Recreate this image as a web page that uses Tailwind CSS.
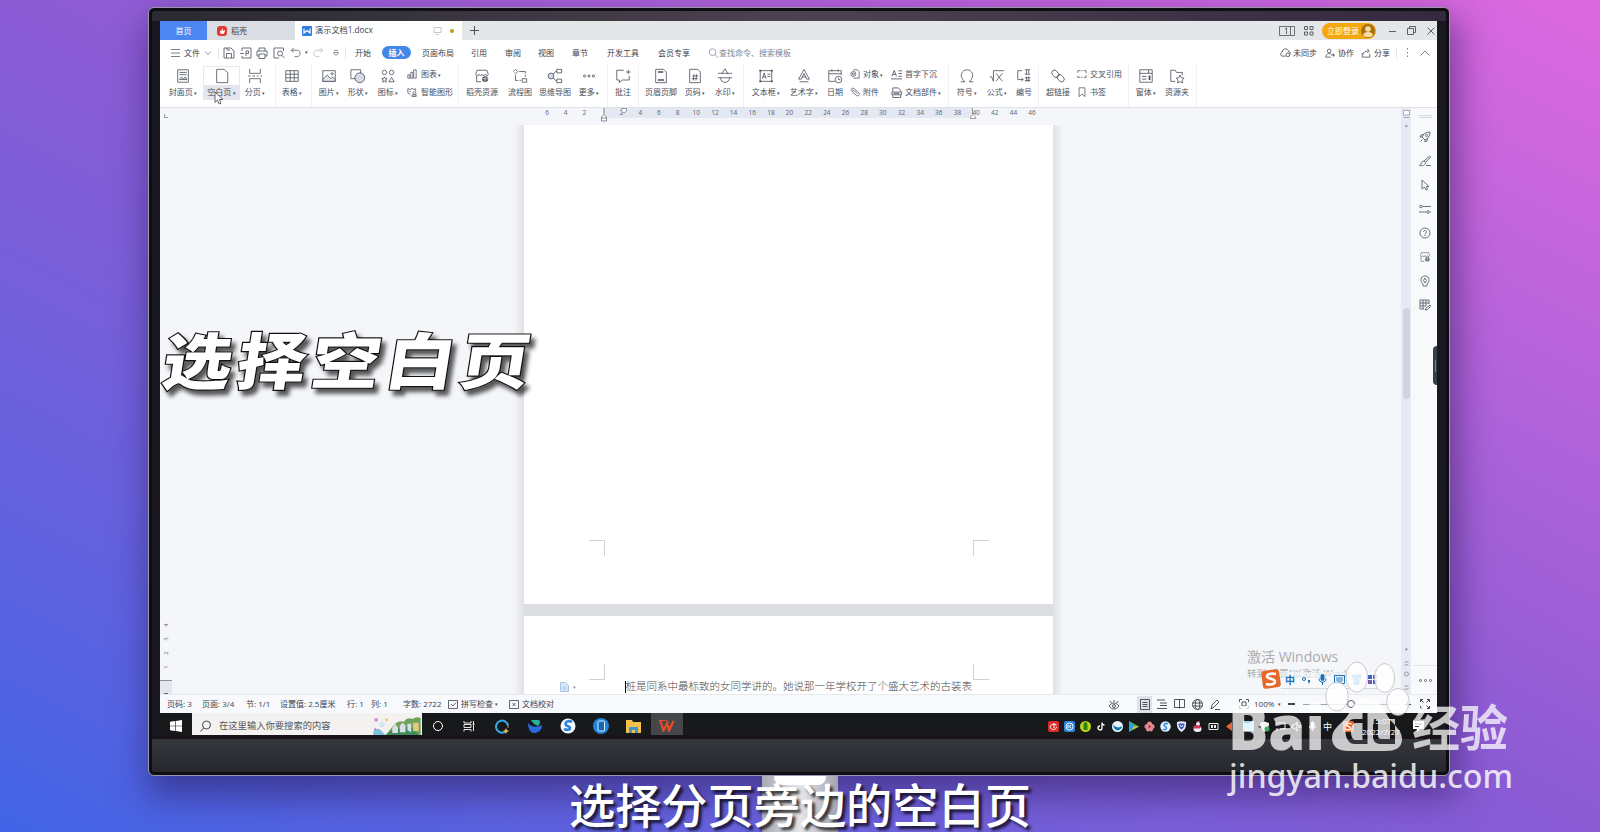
<!DOCTYPE html>
<html>
<head>
    <meta charset="UTF-8">
    <meta name="viewport" content="width=device-width, initial-scale=1.0">
    <title>演示文档1.docx</title>
    <script src="https://cdn.jsdelivr.net/npm/@tailwindcss/browser@4"></script>
    <style>
        symbol {
            fill: none;
            stroke: currentColor;
            stroke-width: 0.9;
        }
    </style>
</head>
<body class="relative w-[1600px] h-[832px] overflow-hidden pt-[7px] pl-[148px] bg-linear-to-tr from-[#3f64e6] via-[#8a5bd4] to-[#de68e0] font-['Open_Sans','Noto_Sans_CJK_SC',sans-serif] text-[8px] leading-none whitespace-nowrap text-[#3d424e]">

    <!-- Icon set -->
    <svg class="hidden">
        <symbol id="cover" viewBox="0 0 18 18"><path d="M3 2h12v14H3zM5 5h8M5 7.500h8M5 13l2.500-3 2 3 2-3 2 3z"/></symbol>
        <symbol id="blank" viewBox="0 0 18 18"><path d="M3 1.500h8.500l4 4v11H3z"/></symbol>
        <symbol id="break" viewBox="0 0 18 18"><path d="M3 1v5h12V1M3 17v-5h12v5M1 9h3m2 0h3m2 0h2m2 0h2"/></symbol>
        <symbol id="table" viewBox="0 0 18 18"><path d="M2 3h14v12H2zM2 7h14M2 11h14M7 3v12M11.500 3v12"/></symbol>
        <symbol id="image" viewBox="0 0 18 18"><path d="M2 3h14v12H2z"/><path d="M2 13l5-5 4 4 2-2 3 3v2H2z" fill="#e1e4ea"/><circle cx="12.500" cy="6.500" r="1.200"/></symbol>
        <symbol id="shape" viewBox="0 0 18 18"><path d="M1 2h11v10H1z"/><circle cx="11" cy="11" r="5.500" fill="#d5dae3"/></symbol>
        <symbol id="icons" viewBox="0 0 18 18"><circle cx="5" cy="5" r="2.500"/><circle cx="13" cy="5" r="2.500"/><path d="M5 10l1 2h2l-1.500 1.500.5 2.500-2-1.300L3 16l.5-2.500L2 12h2zM13 10.500l3 5h-6z"/></symbol>
        <symbol id="chart" viewBox="0 0 12 12"><path d="M1 7h2.500v4H1zM4.500 4H7v7H4.500zM8 1h3v10H8z"/></symbol>
        <symbol id="smart" viewBox="0 0 12 12"><path d="M1 2l3 1 2-1.500L8 3l2-1v3M1 2v5l3 2M3 5.500h2M6 9.500h5v2H6z"/><circle cx="9" cy="7.500" r="1.800"/></symbol>
        <symbol id="store" viewBox="0 0 18 18"><path d="M3.500 2.500h11L16 7c0 2-3 2-3.500 0-.5 2-3 2-3.500 0-.5 2-3 2-3.500 0C5 9 2 9 2 7zM3 9v6.500h5"/><circle cx="12.500" cy="12.500" r="3" fill="#555b68"/><path d="M12.500 9v7M9 12h7" stroke="#fff" stroke-width=".6"/></symbol>
        <symbol id="flow" viewBox="0 0 18 18"><path d="M4 1.500L6.500 4 4 6.500 1.500 4zM8 4h7v6M4 8v6h6" stroke-dasharray="9 1.500"/><path d="M11.500 12h5v4h-5z"/></symbol>
        <symbol id="mind" viewBox="0 0 18 18"><circle cx="4.500" cy="9" r="3.300" fill="#d5dae3"/><path d="M7 7l3-3.500h1M7 11l3 3.500h1M11 1.500h5.500v4H11zM11 12.500h5.500v4H11z"/></symbol>
        <symbol id="more" viewBox="0 0 18 18"><circle cx="4" cy="9" r="1.200"/><circle cx="9" cy="9" r="1.200"/><circle cx="14" cy="9" r="1.200"/></symbol>
        <symbol id="comment" viewBox="0 0 18 18"><path d="M10 2.500H2v11h3v3l3-3h8V9M12.500 4.500h5M15 2v5"/></symbol>
        <symbol id="header" viewBox="0 0 18 18"><path d="M3 1.500h9l3 3v12H3z"/><path d="M5.500 4.500h6M5.500 13.500h7" stroke-width="1.800"/></symbol>
        <symbol id="pageno" viewBox="0 0 18 18"><path d="M3 1.500h9l3 3v12H3zM6 9h6.500M5.500 12h6.500M8 7l-1 7M11 7l-1 7"/></symbol>
        <symbol id="water" viewBox="0 0 18 18"><path d="M1 6h16M1 11h16M9 1L5.500 6M9 1l3.500 6M4 11c0 7 10 7 10 0"/></symbol>
        <symbol id="textbox" viewBox="0 0 18 18"><path d="M2.500 3h13v12h-13zM5 12l2-6.500L9 12M5.500 10h3M10.500 7h3.500M10.500 9.500h3.500"/><path d="M1.500 2h2v2h-2zM14.500 2h2v2h-2zM1.500 14h2v2h-2zM14.500 14h2v2h-2z" fill="currentColor" stroke="none"/></symbol>
        <symbol id="wordart" viewBox="0 0 18 18"><path d="M9 1.500L3 12.500h3L9 6l3 6.500h3zM6.500 10h5M4 15.500h10"/></symbol>
        <symbol id="date" viewBox="0 0 18 18"><path d="M9 15H2V3h14v5M2 6.500h14M5.500 1.500V4M12.500 1.500V4"/><circle cx="13" cy="13" r="3.700"/><path d="M13 11v2.200h2"/></symbol>
        <symbol id="object" viewBox="0 0 12 12"><path d="M4 1h5l2 2v8H4"/><circle cx="4" cy="6" r="3"/><circle cx="4" cy="6" r="1.200"/></symbol>
        <symbol id="clip" viewBox="0 0 12 12"><path d="M1.500 4.500c-1-3 2-4 3.500-2.500l5.500 5c2 2-.5 5-3 3L3 6C2 4.500 4 3.500 5 4.500L9 8"/></symbol>
        <symbol id="drop" viewBox="0 0 12 12"><path d="M1 8l2.500-6.500L6 8M2 6h3M8 2h4M8 5h4M8 8h4M0 10.800h12"/></symbol>
        <symbol id="parts" viewBox="0 0 12 12"><path d="M2 5V1h6l2.500 2.500V5M2 9v2.500h8.500V9M1 5.500h10.500v3H1zM3 7h6"/></symbol>
        <symbol id="omega" viewBox="0 0 18 18"><path d="M2 15.500h4.500C-1 9 3.500 2 9 2s10 7 2.500 13.500H16"/></symbol>
        <symbol id="sqrt" viewBox="0 0 18 18"><path d="M1 10h2l2 5V3h12M8 6l7 9M15 6l-7 9"/></symbol>
        <symbol id="number" viewBox="0 0 18 18"><path d="M7 3H2v10h6M6 11l2 2-2 2M10 2h6M10 7h6M11.700 2v5M14.300 2v5M10 11h6M10 14h6M12 9.500v6M14.500 9.500v6"/></symbol>
        <symbol id="link" viewBox="0 0 18 18"><rect x="3" y="2" width="6" height="9" rx="3" transform="rotate(-40 6 6.500)"/><rect x="9" y="7" width="6" height="9" rx="3" transform="rotate(-40 12 11.500)"/></symbol>
        <symbol id="cross" viewBox="0 0 12 12"><path d="M4 2H1v2.500M4 10H1V8M8 2h3v3M8 10h3V7.500M5 2h1.500M5 10h1.500"/></symbol>
        <symbol id="bookmark" viewBox="0 0 12 12"><path d="M2.500 1h7v10.500L6 8.500l-3.500 3z"/></symbol>
        <symbol id="form" viewBox="0 0 18 18"><path d="M2 2h14v14H2zM2 6h14M4.500 9.500h5M4.500 12.500h5M12 2v4"/><path d="M13 8.500v5" stroke-width="2"/></symbol>
        <symbol id="folder" viewBox="0 0 18 18"><path d="M7 15H2V2.500h5L8.500 5H15v3M12.500 8l1.400 3 3.100.4-2.200 2.200.6 3.200-2.900-1.500-2.900 1.500.6-3.200L8 11.400l3.100-.4z"/></symbol>
        <symbol id="save" viewBox="0 0 12 12"><path d="M1 1h7l3 3v7H1zM3.500 11V6.500h5V11M4 1v2h3"/></symbol>
        <symbol id="pdf" viewBox="0 0 12 12"><path d="M2 4V1h9v10H2V9M0 6.500h4M6 9V4h2.500v2.500H6"/></symbol>
        <symbol id="print" viewBox="0 0 12 12"><path d="M3 4V1h6v3M3 9H1V4h10v5H9M3 7h6v4.500H3z"/></symbol>
        <symbol id="preview" viewBox="0 0 12 12"><path d="M10.500 4V1H1v10h5"/><circle cx="7" cy="6.500" r="2.500"/><path d="M9 8.500l2.500 2.500"/></symbol>
        <symbol id="undo" viewBox="0 0 12 12"><path d="M4 1L1.500 3.500 4 6M1.500 3.500H8c4 0 4 7 0 7H5"/></symbol>
        <symbol id="search" viewBox="0 0 12 12"><circle cx="5.500" cy="5" r="4"/><path d="M8.500 8l3 3.500"/></symbol>
        <symbol id="cloud" viewBox="0 0 12 12"><path d="M6 10H3C0 10 0 6 2.500 5.500 2.500 1 9 1 9.500 5c2 .3 2 2 1.500 3"/><circle cx="8.500" cy="8.500" r="2"/></symbol>
        <symbol id="user" viewBox="0 0 12 12"><circle cx="5" cy="3.500" r="2.200"/><path d="M1 11c0-5 6-5 7-3M1 11h6M8 8.500h4M10 6.500v4"/></symbol>
        <symbol id="share" viewBox="0 0 12 12"><path d="M1.500 6v5h9V7M2.500 8c0-3 3-4.500 6.500-4.500M7.500 1L10 3.500 7.500 6"/></symbol>
        <symbol id="rocket" viewBox="0 0 12 12"><path d="M11 1c-4 0-7 2-8 5l3 3c3-1 5-4 5-8zM5 3.500L2 4 1 6h2M8.500 7L8 10l-2 1V9M1.500 10.500l2-2"/><circle cx="7.500" cy="4.500" r="1"/></symbol>
        <symbol id="brush" viewBox="0 0 12 12"><path d="M10.500 1L5 6l1.500 1.500L11.500 2zM5 6c-3 0-2 3-4.500 4.500 2.500.5 6 0 6-3M7 10.500h5"/></symbol>
        <symbol id="arrow" viewBox="0 0 12 12"><path d="M3 1v9l2.500-2L7 11l1.500-.7L7.500 7.500H10z"/></symbol>
        <symbol id="sliders" viewBox="0 0 12 12"><circle cx="2" cy="3.500" r="1.300"/><circle cx="9" cy="9" r="1.300"/><path d="M4 3.500h8M0 9h7M11 9h1"/></symbol>
        <symbol id="help" viewBox="0 0 12 12"><circle cx="6" cy="6" r="5"/><path d="M4.500 5c0-2 3-2 3 0 0 1.200-1.500 1-1.500 2.300M6 8v1"/></symbol>
        <symbol id="bulb" viewBox="0 0 12 12"><path d="M4 9C1 7 1 1 6 1s5 6 2 8v2H4z"/><path d="M6 3l1.500 2.500L6 8 4.500 5.500z"/></symbol>
        <symbol id="grid" viewBox="0 0 12 12"><path d="M5 10H1V1h9v4M1 4h9M1 7h6M4 1v9M7 1v6M6 11l1-2 4-3 .5 1.500-3 3z"/></symbol>
    </svg>

    <!-- Monitor -->
    <div class="relative w-[1302px] h-[769px] rounded-[6px] border border-[#9b96ad] bg-[#0e0d11] pt-[3px] px-[3px] shadow-[4px_16px_34px_4px_rgba(35,20,80,0.5)]">
        <div class="h-[761px] rounded-[3px] bg-[#191820] flex flex-col">
            <div class="h-[10px] bg-linear-to-r from-[#2b2932] via-[#4b434f] to-[#332a40] shrink-0 rounded-t-[3px]"></div>
            <div class="w-[1277px] h-[714px] ml-2 bg-[#f4f6f9] flex flex-col overflow-hidden">

                <!-- Tabs -->
                <div class="h-[19px] shrink-0 flex items-center bg-[#e4e6e8]">
                    <div class="w-[47px] h-full bg-[#4d86f0] text-white flex items-center justify-center">首页</div>
                    <div class="w-[88px] h-full bg-[#dadde2] flex items-center gap-1 pl-2.5">
                        <svg class="size-[10px]" viewBox="0 0 10 10"><rect width="10" height="10" rx="3" fill="#e23b36"/><path d="M3 5c2 0 2-1 2-3 1 1 1 2 .5 3L8 4c0 2-1 4-3 4S3 6.500 3 5z" fill="#fff"/></svg>
                        <span>稻壳</span>
                    </div>
                    <div class="w-[167px] h-full bg-white flex items-center pl-[7px]">
                        <svg class="size-[10px] mr-[3px]" viewBox="0 0 10 10"><rect width="10" height="10" rx="1" fill="#2e7ce0"/><path d="M2 2.500v4.500l3-2.500L8 7V2.500" fill="none" stroke="#fff" stroke-width="1.200"/></svg>
                        <span class="w-[58px] text-[8.200px]">演示文档1.docx</span>
                        <svg class="w-[9px] h-[8px] ml-[60px]" viewBox="0 0 9 8" fill="none" stroke="#c3c8d0"><path d="M1 .5h7v5H1zM3 7.500h3"/></svg>
                        <span class="size-1 rounded-full bg-[#cf9420] ml-2"></span>
                    </div>
                    <svg class="size-[9px] ml-2" viewBox="0 0 9 9" stroke="#4a4f5c"><path d="M4.500 0v9M0 4.500h9"/></svg>
                    <div class="ml-auto pr-[2px] flex items-center text-[#5a606c]">
                        <svg class="w-4 h-[10px] mr-[9px]" viewBox="0 0 16 10" fill="none" stroke="currentColor" stroke-width=".9"><path d="M.5.5h15v9H.5zM11.500 .5v9M6 3l1.500-1v6"/></svg>
                        <svg class="size-[10px] mr-2" viewBox="0 0 10 10" fill="none" stroke="currentColor"><path d="M.5.5h3v3h-3zM6 .5h3v3H6zM.5 6h3v3h-3zM6 6h3v3H6z"/></svg>
                        <div class="w-[54px] h-4 rounded-full bg-[#f5a70f] text-white flex items-center justify-between pl-[5px] pr-px">
                            <span>立即登录</span>
                            <svg class="size-[14px]" viewBox="0 0 14 14"><circle cx="7" cy="7" r="7" fill="#a8700f"/><circle cx="7" cy="5" r="2.800" fill="#f7dca4"/><path d="M2 11c1-4 9-4 10 0-2 3-8 3-10 0z" fill="#f7dca4"/></svg>
                        </div>
                        <svg class="w-[7px] h-2 ml-[13px]" viewBox="0 0 7 8" stroke="currentColor"><path d="M0 4.500h7"/></svg>
                        <svg class="size-[9px] ml-[11px]" viewBox="0 0 9 9" fill="none" stroke="currentColor"><path d="M.5 2.500h6v6h-6zM2.500 2V.5h6v6H7"/></svg>
                        <svg class="size-2 ml-[11px]" viewBox="0 0 8 8" stroke="currentColor"><path d="M.5.5l7 7M7.500.5l-7 7"/></svg>
                    </div>
                </div>

                <!-- Menu bar -->
                <div class="h-[25px] shrink-0 flex items-center bg-white pl-[11px] pr-[7px] *:shrink-0">
                    <svg class="w-[9px] h-2" viewBox="0 0 9 8" stroke="#5a606c"><path d="M0 .5h9M0 4h9M0 7.500h9" stroke-width=".8"/></svg>
                    <span class="ml-1 w-4">文件</span>
                    <svg class="ml-1 w-2 h-2" viewBox="0 0 8 8" fill="none" stroke="#8b909b"><path d="M1 2.500L4 5.500l3-3"/></svg>
                    <span class="ml-1.5 w-px h-3 bg-[#e2e4e8]"></span>
                    <svg class="ml-1 size-3 text-[#5a606c]"><use href="#save"/></svg>
                    <svg class="ml-[5px] size-3 text-[#5a606c]"><use href="#pdf"/></svg>
                    <svg class="ml-1 size-3 text-[#5a606c]"><use href="#print"/></svg>
                    <svg class="ml-[5px] size-3 text-[#5a606c]"><use href="#preview"/></svg>
                    <svg class="ml-[5px] size-[11px] text-[#5a606c]"><use href="#undo"/></svg>
                    <span class="ml-[2px] w-[6px] text-[5px] text-center">▾</span>
                    <svg class="ml-1 size-[11px] text-[#b9bdc5] -scale-x-100"><use href="#undo"/></svg>
                    <svg class="ml-2 w-2 h-2" viewBox="0 0 8 8" fill="none" stroke="#8b909b"><path d="M2 1.500h4M1.500 3.500h5L4 6.500z"/></svg>
                    <span class="ml-[5px] w-px h-3 bg-[#e2e4e8]"></span>
                    <span class="ml-[9px] w-[17px]">开始</span>
                    <span class="ml-2.5 w-[29px] h-[13px] rounded-full bg-[#3f87e8] text-white font-bold flex items-center justify-center">插入</span>
                    <span class="ml-[11px] w-8">页面布局</span>
                    <span class="ml-[17px] w-4">引用</span>
                    <span class="ml-[18px] w-4">审阅</span>
                    <span class="ml-[17px] w-4">视图</span>
                    <span class="ml-[18px] w-4">章节</span>
                    <span class="ml-[19px] w-8">开发工具</span>
                    <span class="ml-[19px] w-8">会员专享</span>
                    <svg class="ml-[18px] size-[10px] text-[#8088a0]"><use href="#search"/></svg>
                    <span class="ml-px text-[#7d859b]">查找命令、搜索模板</span>
                    <svg class="ml-auto size-[11px]"><use href="#cloud"/></svg>
                    <span class="ml-[2px]">未同步</span>
                    <svg class="ml-2 size-[10px]"><use href="#user"/></svg>
                    <span class="ml-[3px]">协作</span>
                    <svg class="ml-[7px] size-[10px]"><use href="#share"/></svg>
                    <span class="ml-[3px]">分享</span>
                    <span class="ml-[6px] w-px h-3 bg-[#e2e4e8]"></span>
                    <svg class="ml-[9px] w-[3px] h-[9px]" viewBox="0 0 3 9" fill="#7b808b"><path d="M1 0h1v1.500H1zM1 4h1v1.500H1zM1 7.500h1V9H1z"/></svg>
                    <svg class="ml-[11px] w-[10px] h-[6px]" viewBox="0 0 10 6" fill="none" stroke="#7b808b"><path d="M.5 5.500L5 1l4.500 4.500"/></svg>
                </div>

                <!-- Ribbon -->
                <div class="h-[43px] shrink-0 flex items-start bg-white border-b border-[#dfe2e6] pl-[3px] *:shrink-0 text-[#484e5b]">
                    <div class="w-10 h-[34px] pt-[3px] flex flex-col items-center gap-1"><svg class="size-4"><use href="#cover"/></svg><span>封面页<i class="not-italic text-[5px]"> ▾</i></span></div>
                    <div class="w-[37px] h-[34px] mt-px pt-[2px] border border-[#e6e8ec] bg-linear-to-b from-white from-55% to-[#e3e6ec] to-55% flex flex-col items-center gap-1"><svg class="size-4 shrink-0 -mt-px"><use href="#blank"/></svg><span>空白页<i class="not-italic text-[5px]"> ▾</i></span></div>
                    <div class="w-[30px] pt-[3px] flex flex-col items-center gap-1"><svg class="size-4"><use href="#break"/></svg><span>分页<i class="not-italic text-[5px]"> ▾</i></span></div>
                    <span class="ml-[5px] w-px h-[42px] bg-[#f0f1f3]"></span>
                    <div class="w-8 pt-[3px] flex flex-col items-center gap-1"><svg class="size-4"><use href="#table"/></svg><span>表格<i class="not-italic text-[5px]"> ▾</i></span></div>
                    <span class="ml-[3px] mr-[2px] w-px h-[42px] bg-[#f0f1f3]"></span>
                    <div class="w-[30px] pt-[3px] flex flex-col items-center gap-1"><svg class="size-4"><use href="#image"/></svg><span>图片<i class="not-italic text-[5px]"> ▾</i></span></div>
                    <div class="w-[28px] pt-[3px] flex flex-col items-center gap-1"><svg class="size-4"><use href="#shape"/></svg><span>形状<i class="not-italic text-[5px]"> ▾</i></span></div>
                    <div class="w-8 pt-[3px] flex flex-col items-center gap-1"><svg class="size-4"><use href="#icons"/></svg><span>图标<i class="not-italic text-[5px]"> ▾</i></span></div>
                    <div class="w-[53px] ml-px pl-[2px] pt-1 flex flex-col gap-2">
                        <div class="flex items-center gap-1"><svg class="size-[10px]"><use href="#chart"/></svg><span>图表<i class="not-italic text-[5px]"> ▾</i></span></div>
                        <div class="flex items-center gap-1"><svg class="size-[10px]"><use href="#smart"/></svg><span>智能图形</span></div>
                    </div>
                    <span class="w-px h-[42px] bg-[#f0f1f3]"></span>
                    <div class="w-[46px] pt-[3px] flex flex-col items-center gap-1"><svg class="size-4"><use href="#store"/></svg><span>稻壳资源</span></div>
                    <div class="w-[30px] pt-[3px] flex flex-col items-center gap-1"><svg class="size-4"><use href="#flow"/></svg><span>流程图</span></div>
                    <div class="w-10 pt-[3px] flex flex-col items-center gap-1"><svg class="size-4"><use href="#mind"/></svg><span>思维导图</span></div>
                    <div class="w-[28px] pt-[3px] flex flex-col items-center gap-1"><svg class="size-4"><use href="#more"/></svg><span>更多<i class="not-italic text-[5px]"> ▾</i></span></div>
                    <span class="ml-1 w-px h-[42px] bg-[#f0f1f3]"></span>
                    <div class="w-[30px] pt-[3px] flex flex-col items-center gap-1"><svg class="size-4"><use href="#comment"/></svg><span>批注</span></div>
                    <span class="w-px h-[42px] bg-[#f0f1f3]"></span>
                    <div class="w-11 pt-[3px] flex flex-col items-center gap-1"><svg class="size-4"><use href="#header"/></svg><span>页眉页脚</span></div>
                    <div class="w-6 pt-[3px] flex flex-col items-center gap-1"><svg class="size-4"><use href="#pageno"/></svg><span>页码<i class="not-italic text-[5px]"> ▾</i></span></div>
                    <div class="w-9 pt-[3px] flex flex-col items-center gap-1"><svg class="size-4"><use href="#water"/></svg><span>水印<i class="not-italic text-[5px]"> ▾</i></span></div>
                    <span class="w-px h-[42px] bg-[#f0f1f3]"></span>
                    <div class="w-11 pt-[3px] flex flex-col items-center gap-1"><svg class="size-4"><use href="#textbox"/></svg><span>文本框<i class="not-italic text-[5px]"> ▾</i></span></div>
                    <div class="w-8 pt-[3px] flex flex-col items-center gap-1"><svg class="size-4"><use href="#wordart"/></svg><span>艺术字<i class="not-italic text-[5px]"> ▾</i></span></div>
                    <div class="w-[30px] pt-[3px] flex flex-col items-center gap-1"><svg class="size-4"><use href="#date"/></svg><span>日期</span></div>
                    <div class="w-[41px] pt-1 flex flex-col gap-2">
                        <div class="flex items-center gap-[3px]"><svg class="size-[10px]"><use href="#object"/></svg><span>对象<i class="not-italic text-[5px]"> ▾</i></span></div>
                        <div class="flex items-center gap-[3px]"><svg class="size-[10px]"><use href="#clip"/></svg><span>附件</span></div>
                    </div>
                    <div class="w-[57px] pt-1 flex flex-col gap-2">
                        <div class="h-[10px] flex items-center gap-[3px]"><svg class="size-[11px]"><use href="#drop"/></svg><span>首字下沉</span></div>
                        <div class="h-[10px] flex items-center gap-[3px]"><svg class="size-[11px]"><use href="#parts"/></svg><span>文档部件<i class="not-italic text-[5px]"> ▾</i></span></div>
                    </div>
                    <span class="w-px h-[42px] bg-[#f0f1f3] mr-[3px]"></span>
                    <div class="w-[30px] pt-[3px] flex flex-col items-center gap-1"><svg class="size-4"><use href="#omega"/></svg><span>符号<i class="not-italic text-[5px]"> ▾</i></span></div>
                    <div class="w-[30px] pt-[3px] flex flex-col items-center gap-1"><svg class="size-4"><use href="#sqrt"/></svg><span>公式<i class="not-italic text-[5px]"> ▾</i></span></div>
                    <div class="w-6 pt-[3px] flex flex-col items-center gap-1"><svg class="size-4"><use href="#number"/></svg><span>编号</span></div>
                    <span class="ml-[2px] w-px h-[42px] bg-[#f0f1f3]"></span>
                    <div class="w-[38px] pt-[3px] flex flex-col items-center gap-1"><svg class="size-4"><use href="#link"/></svg><span>超链接</span></div>
                    <div class="w-[51px] pt-1 flex flex-col gap-2">
                        <div class="flex items-center gap-[3px]"><svg class="size-[10px]"><use href="#cross"/></svg><span>交叉引用</span></div>
                        <div class="flex items-center gap-[3px]"><svg class="size-[10px]"><use href="#bookmark"/></svg><span>书签</span></div>
                    </div>
                    <span class="w-px h-[42px] bg-[#f0f1f3]"></span>
                    <div class="w-[34px] pt-[3px] flex flex-col items-center gap-1"><svg class="size-4"><use href="#form"/></svg><span>窗体<i class="not-italic text-[5px]"> ▾</i></span></div>
                    <div class="w-[28px] pt-[3px] flex flex-col items-center gap-1"><svg class="size-4"><use href="#folder"/></svg><span>资源夹</span></div>
                    <span class="ml-[5px] w-px h-[42px] bg-[#f0f1f3]"></span>
                </div>

                <!-- Work area -->
                <div class="h-[586px] shrink-0 flex overflow-hidden">
                    <!-- Vertical ruler -->
                    <div class="w-[12px] flex flex-col items-center justify-end text-[6px] text-[#666b77]">
                        <span class="mb-auto mt-1.5 size-1 border-l border-b border-[#9a9ea8]"></span>
                        <span class="size-[8px] mb-[6px] -rotate-90 flex items-center justify-center">4</span>
                        <span class="size-[8px] mb-[6px] -rotate-90 flex items-center justify-center">3</span>
                        <span class="size-[8px] mb-[6px] -rotate-90 flex items-center justify-center">2</span>
                        <span class="size-[8px] mb-[9px] -rotate-90 flex items-center justify-center">1</span>
                        <span class="w-full h-[14px] bg-[#e4e7ee] border-t border-[#8e929c] flex items-end justify-center"><i class="w-1 h-px bg-[#666b77]"></i></span>
                    </div>
                    <div class="w-[1229px] flex flex-col">
                        <!-- Ruler -->
                        <div class="relative h-[16.500px] shrink-0">
                            <div class="ml-[431px] w-[370px] h-[10px] bg-[#e3e8f3]"></div>
                            <div id="ruler" class="-mt-[8.500px] ml-[365.700px] flex text-[6.500px] text-[#5d626e]"></div>
                            <svg class="absolute left-[428px] top-0 w-2 h-[14px]" viewBox="0 0 8 14" fill="#fff" stroke="#7b808b"><path d="M4 0v6M1.500 9L4 6.500 6.500 9v4h-5zM1.500 10h5" stroke-width=".9"/></svg>
                            <svg class="absolute left-[449px] top-0 w-[6px] h-[6px]" viewBox="0 0 6 6" fill="#fff" stroke="#7b808b" stroke-width=".8"><path d="M.5.5h5V3L3 5 .5 3z"/></svg>
                            <svg class="absolute left-[797px] top-0 w-2 h-[11px]" viewBox="0 0 8 11" fill="#fff" stroke="#7b808b" stroke-width=".8"><path d="M3.500 0v6M1.500 9L4 6.500 6.500 9v1.500h-5z"/></svg>
                        </div>
                        <!-- Pages -->
                        <div class="w-[549px] ml-[342px] h-[570px] flex">
                            <div class="w-[10px] h-full shrink-0 bg-linear-to-l from-[#dfe1e3] to-[#f4f6f9]"></div>
                            <div class="w-[529px] h-full flex flex-col gap-3 shrink-0 bg-[#dcdee1]">
                                <div class="h-[479px] shrink-0 bg-white flex items-end justify-between pl-[65px] pr-[64px] pb-[48px]">
                                    <span class="size-4 border-t border-r border-[#cfd2d6]"></span>
                                    <span class="size-4 border-t border-l border-[#cfd2d6]"></span>
                                </div>
                                <div class="grow bg-white pt-[48px]">
                                    <div class="flex justify-between pl-[65px] pr-[64px]">
                                        <span class="size-4 border-b border-r border-[#cfd2d6]"></span>
                                        <span class="size-4 border-b border-l border-[#cfd2d6]"></span>
                                    </div>
                                    <div class="flex items-center mt-px pl-[36px] text-[10.500px] text-[#4a4a4a] font-light font-['Noto_Sans_CJK_SC',sans-serif]">
                                        <svg class="w-[9px] h-[10px]" viewBox="0 0 9 10" fill="#dbe8f8" stroke="#9dbde4" stroke-width=".9"><path d="M.5.5h5l3 3v6h-8zM2.500 5h4M2.500 7h4"/></svg>
                                        <span class="ml-1 text-[5px] text-[#888]">▾</span>
                                        <span class="ml-auto w-px h-3 bg-black"></span>
                                        <span class="w-[346.500px] mr-[81px]">桩是同系中最标致的女同学讲的。她说那一年学校开了个盛大艺术的古装表</span>
                                    </div>
                                </div>
                            </div>
                            <div class="w-[10px] h-full shrink-0 bg-linear-to-r from-[#dfe1e3] to-[#f4f6f9]"></div>
                        </div>
                    </div>
                    <!-- Scrollbar -->
                    <div class="w-[10px] bg-[#e7eaf2] flex flex-col items-center text-[5px] text-[#7b808b]">
                        <svg class="mt-[2px] w-[7px] h-[8px]" viewBox="0 0 7 8" fill="#fff" stroke="#8e95a8" stroke-width=".8"><path d="M.5.500h6v4.500h-6zM.5 7.500h6"/></svg>
                        <span class="mt-[5px]">▴</span>
                        <div class="mt-[180px] w-[7px] h-[91px] rounded-full bg-[#d0d4dd] shrink-0"></div>
                        <span class="mt-auto">▾</span>
                        <svg class="mt-[5px] mb-[1px] w-[5px] h-[36px] shrink-0" viewBox="0 0 5 36" fill="none" stroke="#7b808b" stroke-width=".8"><path d="M.5 6L2.500 4l2 2M.5 9L2.500 7l2 2M.5 29h4M.5 31l2 2 2-2"/><circle cx="2.500" cy="17" r="2"/></svg>
                    </div>
                    <!-- Side panel -->
                    <div class="w-[26px] bg-[#f8f9fb] pl-[2px] flex flex-col items-center gap-3 text-[#5a606c]">
                        <span class="mt-[7px] w-[13px] h-[3px] border-y border-[#d5d8de] mb-px"></span>
                        <svg class="size-3"><use href="#rocket"/></svg>
                        <svg class="size-3"><use href="#brush"/></svg>
                        <svg class="size-3"><use href="#arrow"/></svg>
                        <svg class="size-3"><use href="#sliders"/></svg>
                        <svg class="size-3"><use href="#help"/></svg>
                        <svg class="size-3"><use href="#store"/></svg>
                        <svg class="size-3"><use href="#bulb"/></svg>
                        <svg class="size-3"><use href="#grid"/></svg>
                        <div class="mt-[23px] self-end w-[4px] h-[39px] rounded-l-sm bg-[#353f47] flex items-center justify-center"><i class="w-px h-3 bg-[#5b8a80]"></i></div>
                        <div class="mt-auto w-full h-[29px] border-t border-[#e2e4e8] flex items-center justify-center gap-[2px]">
                            <i class="size-[3px] rounded-full border border-[#5a606c]"></i><i class="size-[3px] rounded-full border border-[#5a606c]"></i><i class="size-[3px] rounded-full border border-[#5a606c]"></i>
                        </div>
                    </div>
                </div>

                <!-- Status bar -->
                <div class="h-[19px] shrink-0 flex items-center bg-[#f7f9fc] border-t border-[#e8eaee] pl-[7px] pr-[7px] *:shrink-0">
                    <span class="w-[35px]">页码: 3</span>
                    <span class="w-[44px]">页面: 3/4</span>
                    <span class="w-[34px]">节: 1/1</span>
                    <span class="w-[67px]">设置值: 2.5厘米</span>
                    <span class="w-6">行: 1</span>
                    <span class="w-8">列: 1</span>
                    <span class="w-[45px]">字数: 2722</span>
                    <svg class="w-[10px] h-[9px] mr-[3px]" viewBox="0 0 10 9" fill="none" stroke="currentColor" stroke-width=".8"><path d="M.5.5h9v8h-9zM3 4l2 2 3-3.500"/></svg>
                    <span class="w-[34px]">拼写检查</span>
                    <span class="w-[14px] text-[5px]">▾</span>
                    <svg class="w-[10px] h-[9px] mr-[3px]" viewBox="0 0 10 9" fill="none" stroke="currentColor" stroke-width=".8"><path d="M.5.5h9v8h-9zM3.500 3l3 3M6.500 3l-3 3"/></svg>
                    <span>文档校对</span>
                    <div class="ml-auto flex items-center">
                        <svg class="w-[12px] h-[11px]" viewBox="0 0 12 11" fill="none" stroke="currentColor" stroke-width=".9"><path d="M1 7c3-4 7-4 10 0-3 4-7 4-10 0zM6 1v2M2 2l1.500 2M10 2L8.500 4"/><circle cx="6" cy="7" r="1.500"/></svg>
                        <span class="ml-[17px] w-[15px] h-[17px] bg-[#dfe2e9] flex items-center justify-center"><svg class="w-[10px] h-[11px]" viewBox="0 0 10 11" fill="none" stroke="currentColor" stroke-width=".9"><path d="M.5.5h9v10h-9zM2.500 3.500h5M2.500 5.500h5M2.500 7.500h5"/></svg></span>
                        <svg class="ml-[5px] w-[10px] h-[10px]" viewBox="0 0 10 10" stroke="currentColor" stroke-width=".9"><path d="M0 1h8M3 4h7M3 6.500h7M0 9.500h10"/></svg>
                        <svg class="ml-[7px] w-[11px] h-[10px]" viewBox="0 0 11 10" fill="none" stroke="currentColor" stroke-width=".9"><path d="M.5.500h10v8H.500zM5.500.500v9"/></svg>
                        <svg class="ml-[7px] size-[11px]" viewBox="0 0 11 11" fill="none" stroke="currentColor" stroke-width=".9"><circle cx="5.500" cy="5.500" r="5"/><ellipse cx="5.500" cy="5.500" rx="2.200" ry="5"/><path d="M.5 4h10M.5 7h10"/></svg>
                        <svg class="ml-[7px] size-[11px]" viewBox="0 0 11 11" fill="none" stroke="currentColor" stroke-width=".9"><path d="M1 10l1-4 5-5 2 2-5 5zM5 10.500h5"/></svg>
                        <svg class="ml-[18px] size-[10px]" viewBox="0 0 10 10" fill="none" stroke="currentColor" stroke-width=".9"><path d="M.5 3V.500H3M7 .500h2.500V3M9.500 7v2.500H7M3 9.500H.500V7M3 3h4v4H3z"/></svg>
                        <span class="ml-[5px] w-[22px]">100%</span>
                        <span class="ml-[2px] text-[5px]">▾</span>
                        <span class="ml-[7px] w-[7px] h-[2px] bg-[#3d424e]"></span>
                        <span class="ml-[8px] w-[45px] h-px bg-[#a0a4ad]"></span>
                        <span class="-mx-px size-[8px] rounded-full border border-[#5a606c] bg-white"></span>
                        <span class="w-[46px] h-px bg-[#c0c4cc]"></span>
                        <svg class="ml-[4px] size-[7px]" viewBox="0 0 7 7" stroke="currentColor"><path d="M3.500 0v7M0 3.500h7"/></svg>
                        <svg class="ml-[9px] size-[10px]" viewBox="0 0 10 10" fill="none" stroke="currentColor"><path d="M.5 3V.500H3M7 .500h2.500V3M9.500 7v2.500H7M3 9.500H.500V7M1 1l2.500 2.500M9 1L6.500 3.500M1 9l2.500-2.500M9 9L6.500 6.500"/></svg>
                    </div>
                </div>

                <!-- Taskbar -->
                <div class="h-[22px] shrink-0 flex items-center bg-[#17191b] pt-1 *:shrink-0">
                    <span class="w-8 flex justify-center"><svg class="size-3" viewBox="0 0 12 12" fill="#fff"><path d="M0 1.800l5-.7v4.600H0zM5.600 1L12 0v5.700H5.600zM0 6.300h5v4.600l-5-.7zM5.600 6.300H12V12l-6.400-1z"/></svg></span>
                    <div class="w-[230px] h-[22px] -mt-1 pt-1 bg-[#f3f2f1] flex items-center pl-2 text-[9.300px] text-[#55555a]">
                        <svg class="size-3 -scale-x-100 text-[#333]"><use href="#search"/></svg>
                        <span class="ml-[7px]">在这里输入你要搜索的内容</span>
                        <svg class="ml-auto w-[50px] h-[18px]" viewBox="0 0 50 19"><path d="M13 19L22 8q5-5 10-3 4-5 9-3 5-3 9-1v18z" fill="#6fa35c"/><path d="M0 15q5-5 9 0l4 4H0z" fill="#7ec4d8"/><path d="M14 19q8-9 15-6 8-5 14 0l5 6z" fill="#3f8a5a"/><path d="M20 17v-6l3-4 3 4v6zM28 16V9l3-3 3 3v7zM36 14V7h4v9z" fill="#d9dde6"/><path d="M42 6h6v9h-6z" fill="#e3c87f"/><circle cx="9" cy="8" r="3" fill="#cfe6f5"/><circle cx="3" cy="3" r="2" fill="#d98ad6"/><circle cx="14" cy="3" r="1.500" fill="#f1c04b"/><circle cx="2" cy="13" r="1.200" fill="#d06ccb"/></svg>
                    </div>
                    <span class="w-[31px] flex justify-center"><i class="size-[10px] rounded-full border-[1.500px] border-white"></i></span>
                    <span class="w-[32px] flex justify-center"><svg class="size-3" viewBox="0 0 12 12" fill="none" stroke="#e6e6e6"><path d="M1 1v2h7V1M1 4.500h7v3H1zM1 11.500V9.500h7v2M10.500 1v10M9.500 4h2"/></svg></span>
                    <span class="w-[35px] flex justify-center"><svg class="size-4" viewBox="0 0 16 16" fill="none"><path d="M12 12A6 6 0 1 1 13 8" stroke="#38a8e8" stroke-width="2"/><path d="M11 10l1 2 2 1-2 1-1 2-1-2-2-1 2-1z" fill="#e9b53a"/><path d="M13 8v2" stroke="#e86a3a"/></svg></span>
                    <span class="w-[30px] flex justify-center"><svg class="size-4" viewBox="0 0 16 16"><path d="M1 5c4 5 9 4 14 2 0 6-5 8-8 8C3 15 1 10 1 5z" fill="#2b6be0"/><path d="M4 2h8c2 2 1 4-1 6-2-1-5-2-7-6z" fill="#22b295"/></svg></span>
                    <span class="w-[36px] flex justify-center"><svg class="size-4" viewBox="0 0 16 16"><circle cx="8" cy="8" r="7.500" fill="#f2f8ff"/><path d="M12 4C9 2 4 4 6 7c1 1.500 4 1 4 3s-3 2.500-6 1" fill="none" stroke="#3182dd" stroke-width="2.600"/></svg></span>
                    <span class="w-[30px] flex justify-center"><svg class="size-4" viewBox="0 0 16 16"><circle cx="8" cy="8" r="8" fill="#1f84dc"/><rect x="5" y="3" width="6.500" height="10" rx="1" fill="#1466b8" stroke="#d9efff"/></svg></span>
                    <span class="w-[35px] flex justify-center"><svg class="w-[15px] h-[13px]" viewBox="0 0 15 13"><path d="M0 0h6l1 2h8v11H0z" fill="#f5c14c"/><path d="M3 7h9v6H9v-3H6v3H3z" fill="#3c99c9"/></svg></span>
                    <span class="w-8 h-[22px] -mt-1 pt-1 bg-[#45474a] flex items-center justify-center"><svg class="w-4 h-3" viewBox="0 0 16 12"><path d="M0 0h8.500M1.500 1l3 9.500L9 1.500M8.500 4.500l1.500 6L14.500 1" fill="none" stroke="#ec4a28" stroke-width="2.200"/></svg></span>
                    <!-- Tray -->
                    <div class="ml-auto pr-[13px] flex items-center gap-[5px] text-white">
                        <svg class="size-[11px]" viewBox="0 0 11 11"><rect width="11" height="11" rx="2" fill="#dc2b2b"/><path d="M6 2v5M8.500 4c-5-2-7 1-6 3 2 3 6 1 6-1" stroke="#fff" fill="none"/></svg>
                        <svg class="size-[11px]" viewBox="0 0 11 11"><rect width="11" height="11" rx="2" fill="#2f86dd"/><circle cx="5.500" cy="5.500" r="3.500" stroke="#fff" fill="none"/><path d="M4 4v3M7 4L5 5.500 7 7" stroke="#fff" fill="none"/></svg>
                        <svg class="size-[11px]" viewBox="0 0 11 11"><circle cx="5.500" cy="5.500" r="5.500" fill="#b9d419"/><path d="M3.500 4c0-4 4-4 4 0v5h-4z" fill="#31820e"/></svg>
                        <svg class="size-[11px]" viewBox="0 0 11 11" fill="none"><path d="M8.500 4Q6 4 6 1.500V7a2 2 0 1 1-2-2" stroke="#fff" stroke-width="1.300"/></svg>
                        <svg class="size-[11px]" viewBox="0 0 11 11"><circle cx="5.500" cy="5.500" r="5.500" fill="#e9f4fb"/><path d="M1 4c4 3 6 3 9 1-1 6-8 6-9-1z" fill="#0e76b8"/></svg>
                        <svg class="size-[11px]" viewBox="0 0 11 11"><path d="M1 0l10 5.500L1 11z" fill="#49b556"/><path d="M1 0l5 5.500L1 11z" fill="#2ba2e5"/><path d="M6 5.500L11 5.500 4 9z" fill="#f1b93d"/></svg>
                        <svg class="size-[11px]" viewBox="0 0 11 11" fill="#e08b8f"><circle cx="5.500" cy="3" r="2.500"/><circle cx="8" cy="5.500" r="2.500"/><circle cx="3" cy="5.500" r="2.500"/><circle cx="4" cy="8.500" r="2"/><circle cx="7" cy="8.500" r="2"/><circle cx="5.500" cy="5.500" r="1.200" fill="#b03540"/></svg>
                        <svg class="size-[11px]" viewBox="0 0 11 11"><circle cx="5.500" cy="5.500" r="5.200" fill="#e8f4ff"/><path d="M8 3C6 1.500 3 3 4.500 5 6 6 7 6 6.500 7.500S4 9 3 8" fill="none" stroke="#3590e0" stroke-width="1.600"/></svg>
                        <svg class="size-[11px]" viewBox="0 0 11 11"><path d="M1 1q4.500-1.500 9 0c.5 5-1 8-4.500 10C2 9 .5 6 1 1z" fill="#e6ecff"/><path d="M2.500 2.500h6c0 3-1 5-3 6-2-1-3-3-3-6z" fill="#3454c8"/><path d="M4 4l1.500 2L7 4" stroke="#fff" fill="none"/></svg>
                        <svg class="size-[11px]" viewBox="0 0 11 11"><circle cx="6" cy="3" r="2" fill="#eee"/><ellipse cx="5.500" cy="8" rx="4" ry="3" fill="#f4f4f4"/><path d="M2 5h6v2H2zM5 0l3 1" fill="#d9325e" stroke="#d9325e"/></svg>
                        <svg class="size-[11px]" viewBox="0 0 11 11"><path d="M1 2.500h9v6H1z" fill="none" stroke="#eee"/><path d="M3 4h2v3H3zM6 4h2v3H6z" fill="#eee"/></svg>
                        <svg class="size-[11px]" viewBox="0 0 11 11"><path d="M8 1v9L2 5.500z" fill="#e8663c"/></svg>
                        <svg class="size-[11px] ml-[3px]" viewBox="0 0 11 11"><rect width="11" height="10" fill="#9fd4f5"/></svg>
                        <svg class="size-[11px]" viewBox="0 0 11 11"><path d="M1 2l4.500-1.500L10 2c0 5-2 7-4.500 9C3 9 1 7 1 2z" fill="#f3f6f3"/><circle cx="8" cy="8" r="2.500" fill="#3cae62"/></svg>
                        <svg class="size-[11px]" viewBox="0 0 11 11" fill="none" stroke="#fff"><path d="M1 5V2h9v6H5M2 7v3"/></svg>
                        <svg class="size-[11px]" viewBox="0 0 11 11" fill="none" stroke="#fff"><path d="M1 4h2l3-3v9L3 7H1zM7.500 4l3 3M10.500 4l-3 3"/></svg>
                        <svg class="size-[11px]" viewBox="0 0 11 11" fill="none" stroke="#fff"><rect x="4" y="1" width="3" height="6" rx="1.500" fill="#fff"/><path d="M2.500 5c0 4 6 4 6 0M5.500 8v2"/></svg>
                        <span class="w-[11px] text-[9px]">中</span>
                        <svg class="size-[11px] ml-[4px]" viewBox="0 0 11 11"><rect width="11" height="11" rx="2" fill="#ec6428"/><path d="M8.500 3C5 1.500 3 3 4 4.500s4 1 3.500 3S4 9 2.500 8" fill="none" stroke="#fff" stroke-width="1.400"/></svg>
                        <div class="w-[44px] h-[18px] flex flex-col items-center gap-[3px] text-[8px]"><span>15:07</span><span>2022/7/27</span></div>
                        <svg class="size-[11px] ml-[5px]" viewBox="0 0 11 11"><path d="M0 0h11v8H7L4 11V8H0z" fill="#fff"/><path d="M2 3h7M2 5.500h4" stroke="#333"/></svg>
                    </div>
                </div>
            </div>
            <div class="h-[4px] bg-[#1a141a] shrink-0"></div>
            <div class="grow bg-linear-to-b from-[#36373c] to-[#27282d] rounded-b-[3px]"></div>
        </div>
    </div>

    <!-- Monitor stand -->
    <div class="relative w-[76px] h-[57px] ml-[614px] bg-linear-to-r from-[#aaaab4] via-[#e6e6ea] to-[#a4a4b0] flex justify-center"><div class="w-[52px] h-[9px] rounded-b-lg bg-white"></div></div>

    <!-- Windows activation notice -->
    <div class="absolute left-[1247px] top-[650px] text-[#a9acb0]">
        <div class="text-[14px]">激活 Windows</div>
        <div class="mt-[5px] text-[9.500px]">转到"设置"以激活 Windows。</div>
    </div>

    <!-- Input method bar -->
    <div class="absolute left-[1261px] top-[669px] w-[118px] h-5 flex items-center text-[#1c6fb8]">
        <svg class="size-5" viewBox="0 0 20 20"><rect x="1" y="1" width="18" height="18" rx="3" fill="#e6682a" transform="rotate(-8 10 10)"/><path d="M15 5C10 4 6 5 6 7.500s8 2 8 5-5 3.500-9 2.500" fill="none" stroke="#fff" stroke-width="2.600"/></svg>
        <div class="w-[98px] h-[17px] mt-[2px] border-b border-[#d5dbe4] bg-[#f8fbff]/60 flex items-center gap-[6px] pl-[4px]">
            <span class="text-[10px] font-bold">中</span>
            <svg class="size-[10px]" viewBox="0 0 10 10"><circle cx="3" cy="4" r="1.500" fill="none" stroke="currentColor"/><path d="M7 5h2v2L7.500 9V7H7z" fill="currentColor"/></svg>
            <svg class="size-[11px]" viewBox="0 0 11 11"><rect x="3.500" y="0" width="4" height="7" rx="2" fill="currentColor"/><path d="M2 4.500c0 5 7 5 7 0M5.500 8v3" fill="none" stroke="currentColor"/></svg>
            <svg class="w-[11px] h-[9px]" viewBox="0 0 11 9" fill="none" stroke="currentColor"><path d="M.5.500h10v8H.500zM2 3h7M2 5h7M3 7h5"/></svg>
            <svg class="size-[11px]" viewBox="0 0 11 11"><path d="M0 2l3-2q2.500 2 5 0l3 2-1.500 3L8.500 4v7h-6V4L1.500 5z" fill="#1a7fd8"/></svg>
            <svg class="size-[9px]" viewBox="0 0 9 9"><path d="M0 0h4v4H0zM5 5h4v4H5z" fill="#3c63c8"/><path d="M5 0h4v4H5zM0 5h4v4H0z" fill="#7a58b0"/></svg>
        </div>
    </div>

    <!-- Mouse pointer -->
    <svg class="absolute left-[214px] top-[91px] w-[10px] h-[14px]" viewBox="0 0 10 14" fill="#fff" stroke="#555" stroke-width=".9"><path d="M1 1v10.500l2.500-2.300L5 13l2-.8-1.600-3.700H9z"/></svg>

    <!-- Caption beside the page -->
    <svg class="absolute left-[150px] top-[315px] w-[400px] h-[95px] drop-shadow-[4px_5px_2px_rgba(0,0,0,0.65)]" viewBox="0 0 400 95">
        <text transform="translate(10 68.500) skewX(-9) scale(1.130 1)" x="0" y="0" font-size="61" font-weight="900" textLength="324" class="font-['Noto_Sans_CJK_SC',sans-serif]" fill="#fff" stroke="#111" stroke-width="2.200" paint-order="stroke" stroke-linejoin="miter">选择空白页</text>
    </svg>

    <!-- Subtitle -->
    <div class="absolute left-[569px] top-[780px] text-[46.200px] leading-[46px] font-medium font-['Noto_Sans_CJK_SC',sans-serif] text-white [text-shadow:3px_3px_3px_rgba(0,0,0,0.75)]">选择分页旁边的空白页</div>

    <!-- Baidu watermark -->
    <svg class="absolute left-[1220px] top-[640px] w-[300px] h-[170px]" viewBox="0 0 300 170" fill="#fff" fill-opacity=".74">
        <g stroke="#a9a9ae" stroke-opacity=".6" fill-opacity=".85">
            <ellipse cx="136.800" cy="37" rx="10.800" ry="15"/>
            <ellipse cx="164.500" cy="38" rx="10" ry="14.500"/>
            <ellipse cx="117" cy="56.500" rx="11.300" ry="14.500"/>
            <ellipse cx="178" cy="62" rx="11.300" ry="13.500"/>
        </g>
        <path fill-rule="evenodd" d="M147 58c11 0 15 8 20 17s15 14 15 24c0 9-7 12-16 12h-38c-9 0-16-4-16-13 0-10 11-15 16-23s9-17 19-17zM142.500 73v6h-8c-12 0-12 25 0 25h13V73zM142.500 83v17h-7c-6 0-6-17 0-17zM153 79v17c0 6 3 8 8 8h14V79h-5v20h-8c-3 0-4-1-4-4V79z"/>
        <text x="8" y="110" font-size="62" font-weight="800" textLength="97" lengthAdjust="spacingAndGlyphs" class="font-['Open_Sans',sans-serif]">Bai</text>
        <text x="192" y="106" font-size="49" font-weight="700" textLength="96" lengthAdjust="spacingAndGlyphs" class="font-['Noto_Sans_CJK_SC',sans-serif]">经验</text>
        <text x="9" y="147.500" font-size="32" font-weight="500" textLength="284" lengthAdjust="spacingAndGlyphs" fill-opacity=".84" class="font-['Noto_Sans',sans-serif]">jingyan.baidu.com</text>
    </svg>

    <script>
        // Ruler labels, one every two characters
        const ruler = document.getElementById('ruler');
        for (let n = -6; n <= 46; n += 2) {
            const mark = document.createElement('span');
            mark.className = 'w-[18.670px] shrink-0 text-center';
            mark.textContent = n === 0 ? '' : Math.abs(n);
            ruler.appendChild(mark);
        }
    </script>
</body>
</html>
